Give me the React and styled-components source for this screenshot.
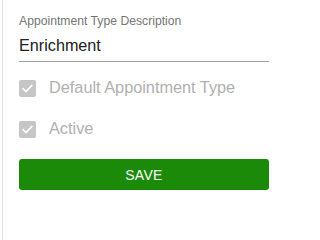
import React from "react";
import styled, { createGlobalStyle } from "styled-components";

const Global = createGlobalStyle`
  html, body { margin: 0; padding: 0; background: #fff; }
  body { font-family: "Liberation Sans", Arial, sans-serif; }
`;

const Panel = styled.div`
  margin-left: 2px;
  border-left: 1px solid #e0e0e0;
  padding: 14px 0 0 16px;
  width: 250px;
  min-height: calc(100vh - 14px);
  display: flex;
  flex-direction: column;
`;

const Field = styled.div`
  display: flex;
  flex-direction: column;
  border-bottom: 1px solid #9e9e9e;
  padding-bottom: 6px;
`;

const Label = styled.label`
  font-size: 12.2px;
  line-height: 14px;
  color: #757575;
`;

const Value = styled.div`
  margin-top: 8px;
  font-size: 16.2px;
  line-height: 19px;
  color: #212121;
`;

const CheckRow = styled.div`
  display: flex;
  align-items: center;
  gap: 13px;
  margin-top: ${(p) => p.$top}px;
  height: 17px;
`;

const Box = styled.span`
  width: 17px;
  height: 17px;
  flex: none;
  border-radius: 2px;
  background: #c6c6c6;
  display: flex;
  align-items: center;
  justify-content: center;
`;

const CheckText = styled.span`
  font-size: 16.3px;
  line-height: 19px;
  padding-bottom: 3px;
  color: #b0b0b0;
`;

const SaveButton = styled.button`
  margin-top: 21px;
  height: 31px;
  width: 100%;
  padding: 0;
  border: none;
  border-radius: 3px;
  background: #1a8a08;
  color: #fff;
  font-family: "Liberation Sans", Arial, sans-serif;
  font-size: 14px;
  letter-spacing: 0.3px;
`;

const Check = () => (
  <svg width="13" height="13" viewBox="0 0 24 24" fill="none" stroke="#fff" strokeWidth="3" strokeLinecap="square">
    <path d="M4 12.5l5 5L20 6.5" />
  </svg>
);

export default function App() {
  return (
    <>
      <Global />
      <Panel>
        <Field>
          <Label>Appointment Type Description</Label>
          <Value>Enrichment</Value>
        </Field>
        <CheckRow $top={18}>
          <Box><Check /></Box>
          <CheckText>Default Appointment Type</CheckText>
        </CheckRow>
        <CheckRow $top={24}>
          <Box><Check /></Box>
          <CheckText>Active</CheckText>
        </CheckRow>
        <SaveButton>SAVE</SaveButton>
      </Panel>
    </>
  );
}
